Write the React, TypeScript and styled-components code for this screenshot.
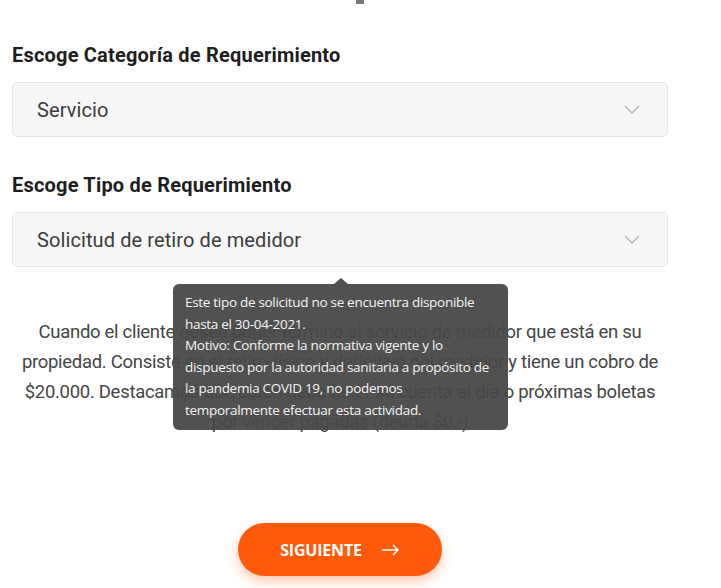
import React from "react";
import styled, { createGlobalStyle } from "styled-components";

const Global = createGlobalStyle`
  html, body { margin: 0; padding: 0; background: #fff; overflow: hidden; }
  body { font-family: Roboto, "Noto Sans", sans-serif; }
`;

const Page = styled.div`
  width: 721px;
  min-height: 588px;
  box-sizing: border-box;
  padding: 0 53px 0 12px;
  display: flex;
  flex-direction: column;
  & > * { flex-shrink: 0; }
`;

const TopMark = styled.div`
  width: 8px;
  height: 4px;
  background: #7a7a7a;
  align-self: flex-start;
  margin-left: 344px;
`;

const Label = styled.div<{ $top: number }>`
  margin-top: ${(p) => p.$top}px;
  font-size: 20px;
  font-weight: 700;
  color: #1e1e1e;
  letter-spacing: 0.2px;
  line-height: 22px;
`;

const Field = styled.div`
  position: relative;
`;

const Select = styled.div`
  margin-top: 16px;
  height: 55px;
  box-sizing: border-box;
  border: 1px solid #e6e6e6;
  border-radius: 5px;
  background: #f7f7f7;
  display: flex;
  align-items: center;
  justify-content: space-between;
  padding: 0 27px 0 24px;
  font-size: 20px;
  color: #3c3c3c;
  letter-spacing: 0.1px;
`;

const Chevron = () => (
  <svg width="16" height="9" viewBox="0 0 16 9" fill="none">
    <path d="M1 1l7 7 7-7" stroke="#b0b0b0" strokeWidth="1.3" />
  </svg>
);

const Tooltip = styled.div`
  position: absolute;
  left: 161px;
  top: 88px;
  width: 335px;
  box-sizing: border-box;
  padding: 8px 12px 8px 12px;
  background: rgba(72, 72, 72, 0.95);
  border-radius: 6px;
  color: #f4f4f4;
  font-family: "Open Sans", sans-serif;
  font-size: 13.5px;
  line-height: 21.6px;
  letter-spacing: -0.3px;
  z-index: 2;
  &::before {
    content: "";
    position: absolute;
    left: 161px;
    top: -6px;
    border-left: 7px solid transparent;
    border-right: 7px solid transparent;
    border-bottom: 6px solid rgba(72, 72, 72, 0.95);
  }
`;

const Paragraph = styled.p`
  margin: 50px 0 0 0;
  text-align: center;
  white-space: nowrap;
  font-size: 18.5px;
  line-height: 30px;
  color: #454545;
  letter-spacing: -0.3px;
`;

const ButtonRow = styled.div`
  margin-top: 86px;
  display: flex;
  justify-content: center;
`;

const Button = styled.button`
  width: 204px;
  height: 53px;
  border: none;
  border-radius: 27px;
  background: #ff5a0a;
  color: #fff;
  font-family: "Open Sans", sans-serif;
  font-weight: 700;
  font-size: 16px;
  letter-spacing: -0.2px;
  display: flex;
  align-items: center;
  justify-content: center;
  gap: 19px;
  box-shadow: 0 6px 12px rgba(255, 110, 40, 0.35);
`;

const Arrow = () => (
  <svg width="19" height="12" viewBox="0 0 19 12" fill="none">
    <path d="M1 6h16M12 1l5 5-5 5" stroke="#fff" strokeWidth="1.6" />
  </svg>
);

export default function App() {
  return (
    <>
      <Global />
      <Page>
        <TopMark />
        <Label $top={40}>Escoge Categoría de Requerimiento</Label>
        <Select>
          <span>Servicio</span>
          <Chevron />
        </Select>
        <Label $top={37}>Escoge Tipo de Requerimiento</Label>
        <Field>
          <Select>
            <span>Solicitud de retiro de medidor</span>
            <Chevron />
          </Select>
          <Tooltip>
            Este tipo de solicitud no se encuentra disponible
            <br />
            hasta el 30-04-2021.
            <br />
            Motivo: Conforme la normativa vigente y lo
            <br />
            dispuesto por la autoridad sanitaria a propósito de
            <br />
            la pandemia COVID 19, no podemos
            <br />
            temporalmente efectuar esta actividad.
          </Tooltip>
        </Field>
        <Paragraph>
          Cuando el cliente desea poner término al servicio de medidor que está en su
          <br />
          propiedad. Consiste en el retiro físico y definitivo del medidor y tiene un cobro de
          <br />
          $20.000. Destacamos que usted debe tener su cuenta al día o próximas boletas
          <br />
          por vencer pagadas (deuda $0.-)
        </Paragraph>
        <ButtonRow>
          <Button>
            SIGUIENTE <Arrow />
          </Button>
        </ButtonRow>
      </Page>
    </>
  );
}
